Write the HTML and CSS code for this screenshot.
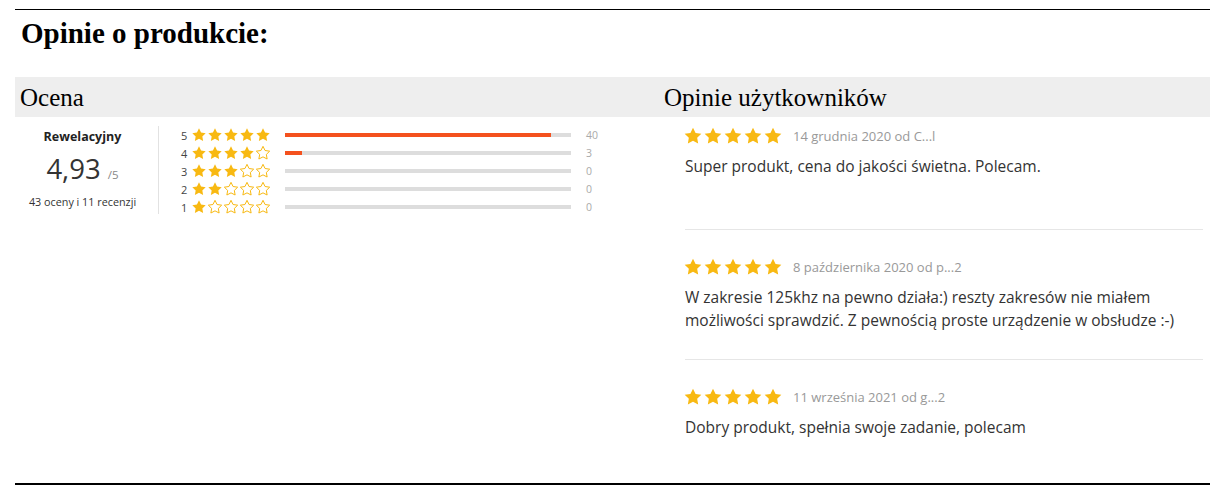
FILE: index.html
```html
<!DOCTYPE html>
<html lang="pl">
<head>
<meta charset="utf-8">
<title>Opinie o produkcie</title>
<link rel="stylesheet" href="styles.css">
</head>
<body>
<svg width="0" height="0" class="defs">
  <defs>
    <path id="star" d="M12 2l3.09 6.26L22 9.27l-5 4.870 1.18 6.88L12 17.77l-6.18 3.25L7 14.14 2 9.27l6.91-1.01L12 2z"/>
  </defs>
</svg>
<div class="page">
  <h2 class="title">Opinie o produkcie:</h2>
  <div class="cols">
    <div class="col-left">
      <div class="col-head">Ocena</div>
      <div class="rating">
        <div class="summary">
          <div class="verdict">Rewelacyjny</div>
          <div class="score">4,93 <span class="of">/5</span></div>
          <div class="counts">43 oceny i 11 recenzji</div>
        </div>
        <div class="dist">
          <div class="dist-row">
            <span class="num">5</span>
            <span class="stars-sm">
              <svg viewBox="0 0 24 24" class="on"><use href="#star"/></svg><svg viewBox="0 0 24 24" class="on"><use href="#star"/></svg><svg viewBox="0 0 24 24" class="on"><use href="#star"/></svg><svg viewBox="0 0 24 24" class="on"><use href="#star"/></svg><svg viewBox="0 0 24 24" class="on"><use href="#star"/></svg>
            </span>
            <span class="bar"><span class="fill" style="width:93%"></span></span>
            <span class="cnt">40</span>
          </div>
          <div class="dist-row">
            <span class="num">4</span>
            <span class="stars-sm">
              <svg viewBox="0 0 24 24" class="on"><use href="#star"/></svg><svg viewBox="0 0 24 24" class="on"><use href="#star"/></svg><svg viewBox="0 0 24 24" class="on"><use href="#star"/></svg><svg viewBox="0 0 24 24" class="on"><use href="#star"/></svg><svg viewBox="0 0 24 24" class="off"><use href="#star"/></svg>
            </span>
            <span class="bar"><span class="fill" style="width:6%"></span></span>
            <span class="cnt">3</span>
          </div>
          <div class="dist-row">
            <span class="num">3</span>
            <span class="stars-sm">
              <svg viewBox="0 0 24 24" class="on"><use href="#star"/></svg><svg viewBox="0 0 24 24" class="on"><use href="#star"/></svg><svg viewBox="0 0 24 24" class="on"><use href="#star"/></svg><svg viewBox="0 0 24 24" class="off"><use href="#star"/></svg><svg viewBox="0 0 24 24" class="off"><use href="#star"/></svg>
            </span>
            <span class="bar"></span>
            <span class="cnt">0</span>
          </div>
          <div class="dist-row">
            <span class="num">2</span>
            <span class="stars-sm">
              <svg viewBox="0 0 24 24" class="on"><use href="#star"/></svg><svg viewBox="0 0 24 24" class="on"><use href="#star"/></svg><svg viewBox="0 0 24 24" class="off"><use href="#star"/></svg><svg viewBox="0 0 24 24" class="off"><use href="#star"/></svg><svg viewBox="0 0 24 24" class="off"><use href="#star"/></svg>
            </span>
            <span class="bar"></span>
            <span class="cnt">0</span>
          </div>
          <div class="dist-row">
            <span class="num">1</span>
            <span class="stars-sm">
              <svg viewBox="0 0 24 24" class="on"><use href="#star"/></svg><svg viewBox="0 0 24 24" class="off"><use href="#star"/></svg><svg viewBox="0 0 24 24" class="off"><use href="#star"/></svg><svg viewBox="0 0 24 24" class="off"><use href="#star"/></svg><svg viewBox="0 0 24 24" class="off"><use href="#star"/></svg>
            </span>
            <span class="bar"></span>
            <span class="cnt">0</span>
          </div>
        </div>
      </div>
    </div>
    <div class="col-right">
      <div class="col-head">Opinie użytkowników</div>
      <div class="review review-first">
        <div class="review-head">
          <span class="stars-lg">
            <svg viewBox="0 0 24 24" class="on"><use href="#star"/></svg><svg viewBox="0 0 24 24" class="on"><use href="#star"/></svg><svg viewBox="0 0 24 24" class="on"><use href="#star"/></svg><svg viewBox="0 0 24 24" class="on"><use href="#star"/></svg><svg viewBox="0 0 24 24" class="on"><use href="#star"/></svg>
          </span>
          <span class="date">14 grudnia 2020 od C...l</span>
        </div>
        <p class="review-text">Super produkt, cena do jakości świetna. Polecam.</p>
      </div>
      <div class="review">
        <div class="review-head">
          <span class="stars-lg">
            <svg viewBox="0 0 24 24" class="on"><use href="#star"/></svg><svg viewBox="0 0 24 24" class="on"><use href="#star"/></svg><svg viewBox="0 0 24 24" class="on"><use href="#star"/></svg><svg viewBox="0 0 24 24" class="on"><use href="#star"/></svg><svg viewBox="0 0 24 24" class="on"><use href="#star"/></svg>
          </span>
          <span class="date">8 października 2020 od p...2</span>
        </div>
        <p class="review-text">W zakresie 125khz na pewno działa:) reszty zakresów nie miałem możliwości sprawdzić. Z pewnością proste urządzenie w obsłudze :-)</p>
      </div>
      <div class="review review-last">
        <div class="review-head">
          <span class="stars-lg">
            <svg viewBox="0 0 24 24" class="on"><use href="#star"/></svg><svg viewBox="0 0 24 24" class="on"><use href="#star"/></svg><svg viewBox="0 0 24 24" class="on"><use href="#star"/></svg><svg viewBox="0 0 24 24" class="on"><use href="#star"/></svg><svg viewBox="0 0 24 24" class="on"><use href="#star"/></svg>
          </span>
          <span class="date">11 września 2021 od g...2</span>
        </div>
        <p class="review-text">Dobry produkt, spełnia swoje zadanie, polecam</p>
      </div>
    </div>
  </div>
</div>
</body>
</html>
```

FILE: styles.css
```css
html, body {
  margin: 0;
  padding: 0;
  background: #fff;
}

body {
  font-family: "Open Sans", "Liberation Sans", sans-serif;
  color: #333;
}

.defs {
  position: absolute;
  width: 0;
  height: 0;
  overflow: hidden;
}

.page {
  width: 1195px;
  margin: 9px 0 0 15px;
  border-top: 1px solid #000;
  border-bottom: 2px solid #000;
}

.title {
  font-family: "Liberation Serif", "Times New Roman", serif;
  font-weight: bold;
  font-size: 29px;
  line-height: 34px;
  color: #000;
  margin: 6px 0 27px 6px;
}

.cols {
  display: flex;
}

.col-left {
  width: 644px;
}

.col-right {
  flex: 1;
}

.col-head {
  box-sizing: border-box;
  height: 40px;
  padding: 2px 5px 0;
  background: #eeeeee;
  font-family: "Liberation Serif", "Times New Roman", serif;
  font-size: 25px;
  line-height: 38px;
  color: #000;
}

/* rating summary */
.rating {
  display: flex;
  padding-top: 9px;
}

.summary {
  box-sizing: border-box;
  width: 144px;
  padding-right: 8px;
  height: 88px;
  border-right: 1px solid #e2e2e2;
  text-align: center;
}

.verdict {
  font-size: 12.5px;
  font-weight: bold;
  line-height: 16px;
  color: #222;
  margin-top: 3px;
}

.score {
  font-size: 27.5px;
  line-height: 34px;
  color: #333;
  margin-top: 7px;
}

.of {
  font-size: 11.5px;
  color: #888;
}

.counts {
  font-size: 10.8px;
  line-height: 14px;
  color: #333;
  margin-top: 3px;
}

.dist {
  padding-left: 22px;
}

.dist-row {
  display: flex;
  align-items: center;
  height: 18px;
}

.num {
  width: 6px;
  font-size: 11px;
  color: #444;
}

.stars-sm {
  display: flex;
  margin-left: 4px;
}

.stars-sm svg {
  width: 16px;
  height: 16px;
}

.on use {
  fill: #f8b912;
}

.off use {
  fill: none;
  stroke: #f8b912;
  stroke-width: 1.5;
  stroke-linejoin: round;
}

.bar {
  position: relative;
  width: 286px;
  height: 4px;
  margin-left: 14px;
  background: #dddddd;
}

.fill {
  display: block;
  height: 100%;
  background: #f4511e;
}

.cnt {
  margin-left: 15px;
  font-size: 10.5px;
  color: #aaa;
}

/* reviews */
.review {
  margin: 0 7px 0 26px;
  padding: 27px 0 27px;
  border-bottom: 1px solid #e6e6e6;
}

.review-first {
  padding-top: 9px;
  padding-bottom: 28px;
}

.review-last {
  border-bottom: none;
  padding-bottom: 21px;
}

.review-head {
  display: flex;
  align-items: center;
  height: 20px;
}

.stars-lg {
  display: flex;
  margin-left: -2px;
}

.stars-lg svg {
  width: 20px;
  height: 20px;
}

.date {
  margin-left: 10px;
  font-size: 13px;
  color: #999;
}

.review-text {
  margin: 9px 0 0;
  min-height: 46px;
  font-size: 15.5px;
  line-height: 23px;
  color: #333;
}
```
